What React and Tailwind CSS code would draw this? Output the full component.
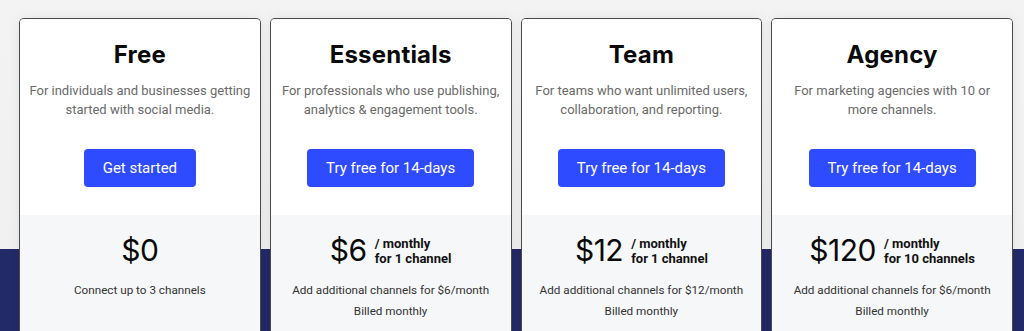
const plans = [
  {
    name: "Free",
    desc: ["For individuals and businesses getting", "started with social media."],
    cta: "Get started",
    price: "$0",
    lines: ["Connect up to 3 channels"],
  },
  {
    name: "Essentials",
    desc: ["For professionals who use publishing,", "analytics & engagement tools."],
    cta: "Try free for 14-days",
    price: "$6",
    per: ["/ monthly", "for 1 channel"],
    lines: ["Add additional channels for $6/month", "Billed monthly"],
  },
  {
    name: "Team",
    desc: ["For teams who want unlimited users,", "collaboration, and reporting."],
    cta: "Try free for 14-days",
    price: "$12",
    per: ["/ monthly", "for 1 channel"],
    lines: ["Add additional channels for $12/month", "Billed monthly"],
  },
  {
    name: "Agency",
    desc: ["For marketing agencies with 10 or", "more channels."],
    cta: "Try free for 14-days",
    price: "$120",
    per: ["/ monthly", "for 10 channels"],
    lines: ["Add additional channels for $6/month", "Billed monthly"],
  },
];

function PlanCard({ plan }) {
  return (
    <div className="flex flex-col h-[330px] border border-b-0 border-[#4a4a4a] rounded-t-[5px] bg-white overflow-hidden shadow-[0_0_12px_rgba(0,0,0,0.07)]">
      {/* top */}
      <div className="flex flex-col items-center pt-[18px] pb-[28px] bg-white">
        <h2 className="font-['Inter',sans-serif] font-bold text-[24px] leading-[36px] text-[#0a0a0a] tracking-[0.2px]">
          {plan.name}
        </h2>
        <p className="mt-[8px] font-['Roboto',sans-serif] text-[13px] leading-[19px] text-[#6a6a6a] text-center">
          {plan.desc[0]}
          <br />
          {plan.desc[1]}
        </p>
        <button className="mt-[30px] h-[38px] px-[19px] rounded-[4px] bg-[#2f4bff] text-white font-['Roboto',sans-serif] text-[15px]">
          {plan.cta}
        </button>
      </div>

      {/* price */}
      <div className="flex-1 flex flex-col items-center pt-[17px] bg-[#f6f7f8]">
        <div className="flex items-center gap-[8px] h-[36px]">
          <span className="font-['Inter',sans-serif] text-[30px] leading-[36px] text-[#0a0a0a] tracking-[-0.5px]">
            {plan.price}
          </span>
          {plan.per && (
            <span className="font-['Roboto',sans-serif] font-bold text-[13px] leading-[15px] text-[#111] pt-[1px]">
              {plan.per[0]}
              <br />
              {plan.per[1]}
            </span>
          )}
        </div>
        <div className="mt-[12px] font-['Roboto',sans-serif] text-[11.7px] leading-[21px] text-[#333] text-center">
          {plan.lines.map((l) => (
            <p key={l}>{l}</p>
          ))}
        </div>
      </div>
    </div>
  );
}

export default function App() {
  return (
    <div className="w-[1024px] h-[331px] overflow-hidden bg-[linear-gradient(to_bottom,#f3f3f3_0px,#f0f0f0_249px,#232a68_249px)]">
      <div className="ml-[19px] mt-[18px] w-[994px] grid grid-cols-4 gap-[9px]">
        {plans.map((p) => (
          <PlanCard key={p.name} plan={p} />
        ))}
      </div>
    </div>
  );
}
